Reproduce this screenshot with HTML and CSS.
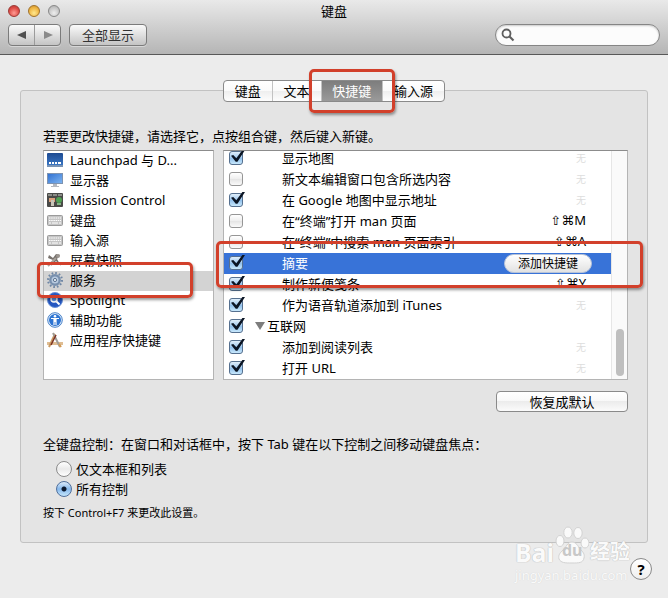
FILE: index.html
```
<!DOCTYPE html>
<html lang="zh-CN">
<head>
    <meta charset="UTF-8">
    <meta name="viewport" content="width=device-width, initial-scale=1.0">
    <title>键盘</title>
    <link rel="stylesheet" href="styles.css">
</head>
<body>

    <header class="titlebar">
        <div class="title-row">
            <div class="lights">
                <button class="light red" aria-label="关闭"></button>
                <button class="light yellow" aria-label="最小化"></button>
                <button class="light grey" aria-label="缩放"></button>
            </div>
            <h1>键盘</h1>
        </div>
        <div class="tool-row">
            <div class="nav-buttons">
                <button aria-label="后退"><svg width="10" height="10" viewBox="0 0 10 10"><path d="M9 1v8L0 5z" fill="#505050"/></svg></button>
                <button aria-label="前进"><svg width="10" height="10" viewBox="0 0 10 10"><path d="M1 1v8l9-4z" fill="#8a8a8a"/></svg></button>
            </div>
            <button class="show-all">全部显示</button>
            <div class="search">
                <svg width="14" height="14" viewBox="0 0 14 14"><circle cx="5.5" cy="5.5" r="4" fill="none" stroke="#5e5e5e" stroke-width="1.8"/><path d="M8.5 8.5l4 4" stroke="#5e5e5e" stroke-width="2.2"/></svg>
                <input type="text" id="search" aria-label="搜索">
            </div>
        </div>
    </header>

    <main class="panel">
        <nav class="tabs">
            <button>键盘</button>
            <button>文本</button>
            <button class="active">快捷键<span class="mark mark-tab"></span></button>
            <button>输入源</button>
        </nav>

        <div class="panel-body">
            <p class="intro">若要更改快捷键，请选择它，点按组合键，然后键入新键。</p>

            <div class="lists">
                <ul class="categories">
                    <li><a href="#">
                        <svg width="16" height="16" viewBox="0 0 16 16"><defs><linearGradient id="lp" x1="0" y1="0" x2="0" y2="1"><stop offset="0" stop-color="#1d4a91"/><stop offset="1" stop-color="#3d7ccb"/></linearGradient></defs><rect y="1" width="16" height="14" rx="1" fill="url(#lp)"/><path d="M0 13h16v2H0z" fill="#7893b5"/><path d="M2 10h2v2H2zM5 10h2v2H5zM8 10h2v2H8zM11 10h3v2h-3z" fill="#fff"/></svg>
                        Launchpad 与 D...</a></li>
                    <li><a href="#">
                        <svg width="16" height="16" viewBox="0 0 16 16"><defs><linearGradient id="mo" x1="0" y1="0" x2="1" y2="1"><stop offset="0" stop-color="#2f6fd0"/><stop offset="1" stop-color="#7fb6f2"/></linearGradient></defs><rect x=".5" y="1.500" width="15" height="10" fill="url(#mo)" stroke="#7e93b0"/><path d="M6 12h4v2h2v1H4v-1h2z" fill="#b4b8bf"/></svg>
                        显示器</a></li>
                    <li><a href="#">
                        <svg width="16" height="16" viewBox="0 0 16 16"><rect y="1" width="16" height="14" rx="1" fill="#4a4a48"/><path d="M1 2h4v2H1zM6 2h4v2H6zM11 2h4v2h-4z" fill="#8b8d88"/><rect x="2" y="6" width="6" height="4" fill="#d9a07c"/><rect x="4" y="8" width="3" height="6" fill="#c8c4b8"/><circle cx="12" cy="8" r="3" fill="#4fa052"/><path d="M10 11h4v2h-4z" fill="#86b386"/></svg>
                        Mission Control</a></li>
                    <li><a href="#">
                        <svg width="16" height="16" viewBox="0 0 16 16"><rect x=".5" y="3.500" width="15" height="10" rx="1" fill="#c6c6c6" stroke="#9b9b9b"/><path d="M2 6h12M2 8.500h12" stroke="#fff" stroke-dasharray="1.500 .7"/><path d="M2 11h2M5 11h6M12 11h2" stroke="#fff"/></svg>
                        键盘</a></li>
                    <li><a href="#">
                        <svg width="16" height="16" viewBox="0 0 16 16"><rect x=".5" y="3.500" width="15" height="10" rx="1" fill="#c6c6c6" stroke="#9b9b9b"/><path d="M2 6h12M2 8.500h12" stroke="#fff" stroke-dasharray="1.500 .7"/><path d="M2 11h2M5 11h6M12 11h2" stroke="#fff"/></svg>
                        输入源</a></li>
                    <li><a href="#">
                        <svg width="16" height="16" viewBox="0 0 16 16"><path d="M2 3l4 3 3-4 4 1-3 4 4 7-5-5-5 5 2-6-5-2z" fill="#77716c"/><path d="M1 14L9 6" stroke="#a8a29c" stroke-width="2"/><circle cx="11" cy="4" r="2" fill="#9b9590"/></svg>
                        屏幕快照</a></li>
                    <li class="selected"><a href="#">
                        <svg width="16" height="16" viewBox="0 0 16 16"><circle cx="8" cy="8" r="7" fill="none" stroke="#6f87a5" stroke-width="2" stroke-dasharray="1.700 1.965"/><circle cx="8" cy="8" r="4.700" fill="#b9cbe0" stroke="#7890ae" stroke-width="2.400"/><circle cx="8" cy="8" r="1.600" fill="#e8eef5" stroke="#5f7692"/></svg>
                        服务</a><span class="mark mark-category"></span></li>
                    <li><a href="#">
                        <svg width="16" height="16" viewBox="0 0 16 16"><circle cx="8" cy="8" r="7.500" fill="#2456c0" stroke="#6d94d8"/><circle cx="7" cy="7" r="3" fill="#5f97ea" stroke="#fff" stroke-width="1.500"/><path d="M9.500 9.500l3 3" stroke="#fff" stroke-width="2"/></svg>
                        Spotlight</a></li>
                    <li><a href="#">
                        <svg width="16" height="16" viewBox="0 0 16 16"><circle cx="8" cy="8" r="7.300" fill="#e3effc" stroke="#4a82c8"/><circle cx="8" cy="8" r="6" fill="#2d74d2"/><circle cx="8" cy="4.200" r="1.300" fill="#fff"/><path d="M4 6.500h8M7 6.500V13M9 6.500V13" fill="none" stroke="#fff" stroke-width="1.200"/><path d="M7 6h2v4H7z" fill="#fff"/></svg>
                        辅助功能</a></li>
                    <li><a href="#">
                        <svg width="16" height="16" viewBox="0 0 16 16"><path d="M0 10h16v3H0z" fill="#dfbd93"/><path d="M8 2L2 15" stroke="#c99a62" stroke-width="2"/><path d="M6 1l7 14" stroke="#a09c96" stroke-width="2"/><path d="M9 3L4 13" stroke="#7c3325" stroke-width="1.500"/><path d="M12 12l2 3" stroke="#d29a55" stroke-width="2"/></svg>
                        应用程序快捷键</a></li>
                </ul>

                <div class="shortcuts">
                    <div class="scroll-area">
                        <table>
                            <tr><td><input type="checkbox" id="s1" checked></td><td><label for="s1">显示地图</label></td><td class="none">无</td></tr>
                            <tr><td><input type="checkbox" id="s2"></td><td><label for="s2">新文本编辑窗口包含所选内容</label></td><td class="none">无</td></tr>
                            <tr><td><input type="checkbox" id="s3" checked></td><td><label for="s3">在 Google 地图中显示地址</label></td><td class="none">无</td></tr>
                            <tr><td><input type="checkbox" id="s4"></td><td><label for="s4">在“终端”打开 man 页面</label></td><td><kbd>⇧⌘</kbd>M</td></tr>
                            <tr><td><input type="checkbox" id="s5"></td><td><label for="s5">在“终端”中搜索 man 页面索引</label></td><td><kbd>⇧⌘</kbd>A</td></tr>
                            <tr class="selected"><td><input type="checkbox" id="s6" checked></td><td><label for="s6">摘要</label></td><td><button class="add">添加快捷键</button></td></tr>
                            <tr><td><input type="checkbox" id="s7" checked></td><td><label for="s7">制作新便笺条</label></td><td><kbd>⇧⌘</kbd>Y</td></tr>
                            <tr><td><input type="checkbox" id="s8" checked></td><td><label for="s8">作为语音轨道添加到 iTunes</label></td><td class="none">无</td></tr>
                            <tr class="group"><td><input type="checkbox" id="s9" checked></td><td><svg width="10" height="10" viewBox="0 0 10 10"><path d="M0 1h10L5 9z" fill="#7d7d7d"/></svg><label for="s9">互联网</label></td><td></td></tr>
                            <tr><td><input type="checkbox" id="s10" checked></td><td><label for="s10">添加到阅读列表</label></td><td class="none">无</td></tr>
                            <tr><td><input type="checkbox" id="s11" checked></td><td><label for="s11">打开 URL</label></td><td class="none">无</td></tr>
                        </table>
                    </div>
                    <div class="scrollbar"><div class="thumb"></div></div>
                    <span class="mark mark-row"></span>
                </div>
            </div>

            <button class="restore">恢复成默认</button>

            <p class="access">全键盘控制：在窗口和对话框中，按下 Tab 键在以下控制之间移动键盘焦点：</p>
            <div class="radios">
                <label><input type="radio" name="access">仅文本框和列表</label>
                <label><input type="radio" name="access" checked>所有控制</label>
            </div>
            <p class="note">按下 Control+F7 来更改此设置。</p>
        </div>
    </main>

    <footer>
        <div class="watermark">
            <div class="brand">
                <span class="bai">Bai</span>
                <span class="paw">
                    <svg width="34" height="38" viewBox="0 0 34 38"><g fill="#fafafa" stroke="#d2d2d2"><ellipse cx="5" cy="15" rx="4" ry="5.500"/><ellipse cx="13" cy="6.500" rx="4.200" ry="5.500"/><ellipse cx="23" cy="7" rx="4.200" ry="5.500"/><ellipse cx="30" cy="17" rx="4" ry="5"/><path d="M17 16c4 0 6 4 8 7 3 3 5 5 4 9-1 5-5 5-12 5S6 37 4 33c-1-4 1-6 4-9 3-2 4-8 9-8z"/></g></svg>
                    <span class="du">du</span>
                </span>
                <span class="jingyan">经验</span>
            </div>
            <div class="site">jingyan.baidu.com</div>
        </div>
        <button class="help" aria-label="帮助">?</button>
    </footer>

</body>
</html>
```

FILE: styles.css
```
* {
    box-sizing: border-box;
}
body {
    margin: 0;
    min-height: 100vh;
    background-color: #ececec;
    color: #000;
    font-family: "Noto Sans", "Noto Sans CJK SC", "DejaVu Sans", sans-serif;
    font-size: 13px;
    line-height: 20px;
}
button, input {
    font: inherit;
    color: inherit;
    margin: 0;
    padding: 0;
}
p, h1, ul {
    margin: 0;
    padding: 0;
}

/* Title bar */
.titlebar {
    height: 55px;
    background: linear-gradient(#e9e9e9, #b5b5b5);
    border-bottom: 1px solid #585858;
}
.title-row {
    display: grid;
    grid-template-columns: 1fr auto 1fr;
    align-items: center;
    height: 22px;
    padding: 0 8px;
}
.title-row h1 {
    font-size: 13px;
    font-weight: normal;
}
.lights {
    display: flex;
    gap: 8px;
}
.light {
    width: 12px;
    height: 12px;
    border: 1px solid #888;
    border-radius: 50%;
}
.red {
    background: radial-gradient(circle at 50% 70%, #ff9c94, #dd4a44 60%, #b83833);
    border-color: #9c3733;
}
.yellow {
    background: radial-gradient(circle at 50% 70%, #ffe88e, #eeb441 60%, #c88d2a);
    border-color: #a0722a;
}
.grey {
    background: radial-gradient(circle at 50% 70%, #eee, #c6c6c6 60%, #aaa);
}
.tool-row {
    display: flex;
    gap: 8px;
    padding: 2px 8px 0;
}
.nav-buttons, .show-all {
    height: 22px;
    border: 1px solid #7b7b7b;
    border-radius: 4px;
    background: linear-gradient(#fafafa, #c4c4c4);
    box-shadow: 0 1px 0 rgba(255, 255, 255, 0.4);
}
.nav-buttons {
    display: flex;
    width: 53px;
}
.nav-buttons button {
    flex: 1;
    display: flex;
    align-items: center;
    justify-content: center;
    border: none;
    background: none;
}
.nav-buttons button + button {
    border-left: 1px solid #9b9b9b;
}
.show-all {
    width: 78px;
    color: #333;
}
.search {
    display: flex;
    align-items: center;
    gap: 4px;
    width: 165px;
    height: 22px;
    margin-left: auto;
    padding: 0 8px 0 5px;
    border: 1px solid #858585;
    border-radius: 11px;
    background-color: #fcfcfc;
    box-shadow: inset 0 1px 2px rgba(0, 0, 0, 0.2);
}
.search input {
    flex: 1;
    min-width: 0;
    border: none;
    outline: none;
    background: none;
}

/* Panel and tabs */
.panel {
    margin: 35px 20px 0;
    border: 1px solid #c2c2c2;
    border-radius: 3px;
    background-color: #e4e4e4;
}
.panel-body {
    padding: 0 19px 19px 22px;
}
.tabs {
    display: flex;
    width: 222px;
    height: 22px;
    margin: -11px auto 24px;
    border: 1px solid #8a8a8a;
    border-radius: 4px;
    background: linear-gradient(#fff, #fafafa 50%, #eee 50%, #fdfdfd);
}
.tabs button {
    position: relative;
    flex: 1 1 auto;
    border: none;
    background: none;
}
.tabs button + button {
    border-left: 1px solid #c2c2c2;
}
.tabs .active {
    background: linear-gradient(#7d7d7d, #9a9a9a);
    color: #fff;
}

/* Red highlight frames */
.mark {
    position: absolute;
    border: 3px solid #d2402b;
    border-radius: 5px;
    box-shadow: 1px 2px 3px rgba(0, 0, 0, 0.4);
    pointer-events: none;
    z-index: 2;
}
.mark-tab {
    inset: -12px -13px;
}
.mark-category {
    top: -9px;
    left: -7px;
    width: 156px;
    height: 36px;
}
.mark-row {
    top: 90px;
    left: -8px;
    right: -16px;
    height: 47px;
}

/* Lists */
.lists {
    display: flex;
    gap: 9px;
    height: 230px;
    margin-top: 4px;
}
.categories, .shortcuts {
    position: relative;
    border: 1px solid #b4b4b4;
    border-top-color: #8c8c8c;
    background-color: #fff;
}
.categories {
    width: 171px;
    list-style: none;
}
.categories li {
    position: relative;
}
.categories a {
    display: flex;
    align-items: center;
    gap: 7px;
    height: 20px;
    padding: 0 0 2px 3px;
    color: #000;
    text-decoration: none;
    white-space: nowrap;
}
.categories .selected {
    background-color: #d3d3d3;
}
.shortcuts {
    display: flex;
    flex: 1;
}
.scroll-area {
    flex: 1;
    overflow: hidden;
}
.scroll-area table {
    width: 100%;
    margin-top: -3px;
    border-collapse: collapse;
}
td {
    height: 21px;
    padding: 0 0 2px;
    line-height: 18px;
    white-space: nowrap;
}
td:first-child {
    width: 58px;
    padding-left: 5px;
}
td:last-child {
    padding-right: 25px;
    text-align: right;
}
td.none {
    color: #ddd;
    font-size: 10px;
}
kbd {
    font-family: "DejaVu Sans", sans-serif;
    font-size: 13px;
}
tr.selected {
    background-color: #3873d8;
    color: #fff;
}
tr.selected td:last-child {
    padding: 0 19px 0 0;
}
.group td:nth-child(2) {
    display: flex;
    align-items: center;
    gap: 2px;
    margin-left: -27px;
}
input[type="checkbox"] {
    appearance: none;
    display: block;
    position: relative;
    width: 14px;
    height: 14px;
    border: 1px solid #969696;
    border-radius: 3px;
    background: linear-gradient(#fff, #eee 50%, #e4e4e4 50%, #fafafa);
}
input[type="checkbox"]:checked {
    border-color: #56708f;
    background: linear-gradient(#e0effb, #9fc8ee 50%, #8dbdea 50%, #c8e8fc);
}
input[type="checkbox"]:checked::after {
    content: "";
    position: absolute;
    top: -2px;
    left: 1px;
    width: 14px;
    height: 13px;
    background-color: #0b1524;
    clip-path: polygon(0 48%, 16% 42%, 38% 68%, 84% 0, 100% 4%, 46% 94%, 34% 94%);
}
.add {
    display: block;
    width: 88px;
    height: 19px;
    margin-left: auto;
    border: 1px solid #b9c4d8;
    border-radius: 10px;
    background: linear-gradient(#fff, #e2e2e2);
    color: #000;
    font-size: 12px;
    line-height: 16px;
}
.scrollbar {
    display: flex;
    align-items: flex-end;
    justify-content: center;
    width: 16px;
    padding-bottom: 3px;
    border-left: 1px solid #e6e6e6;
    background-color: #fafafa;
}
.thumb {
    width: 8px;
    height: 47px;
    border-radius: 4px;
    background-color: #bfbfbf;
}
.restore {
    display: block;
    width: 132px;
    height: 21px;
    margin: 11px 0 0 auto;
    border: 1px solid #8a8a8a;
    border-radius: 4px;
    background: linear-gradient(#fff, #f8f8f8 50%, #ececec 50%, #fbfbfb);
    line-height: 18px;
}

/* Full keyboard access */
.access {
    margin-top: 22px;
}
.radios {
    margin: 5px 0 4px 13px;
}
.radios label {
    display: flex;
    align-items: center;
    gap: 4px;
}
input[type="radio"] {
    appearance: none;
    width: 16px;
    height: 16px;
    border: 1px solid #8c8c8c;
    border-radius: 50%;
    background: linear-gradient(#fff, #eaeaea 50%, #fff);
}
input[type="radio"]:checked {
    border-color: #4f6f9c;
    background: radial-gradient(circle, #0c1a30 2px, transparent 3px), linear-gradient(#dcebfa, #86b8ec 50%, #c4e6fc);
}
.note {
    font-size: 11px;
}

/* Footer */
footer {
    position: relative;
    display: flex;
    justify-content: flex-end;
    padding: 15px 16px 0;
}
.help {
    width: 22px;
    height: 22px;
    border: 1px solid #8a8a8a;
    border-radius: 50%;
    background: linear-gradient(#fff, #efefef);
    font-size: 15px;
    font-weight: bold;
    line-height: 18px;
}
.watermark {
    position: absolute;
    right: 38px;
    bottom: -4px;
    color: #fafafa;
    text-shadow: 0 0 1px #bbb, 0 0 1px #bbb;
}
.brand {
    display: flex;
    align-items: flex-end;
    gap: 1px;
    line-height: 24px;
    font-weight: bold;
}
.bai {
    font-size: 25px;
}
.paw {
    position: relative;
    height: 38px;
}
.du {
    position: absolute;
    left: 7px;
    bottom: 2px;
    color: #c8c8c8;
    font-size: 16px;
    text-shadow: none;
}
.jingyan {
    font-size: 20px;
}
.site {
    margin-top: 2px;
    font-size: 13px;
    line-height: 18px;
    text-shadow: 0 0 1px #ccc;
}
```
